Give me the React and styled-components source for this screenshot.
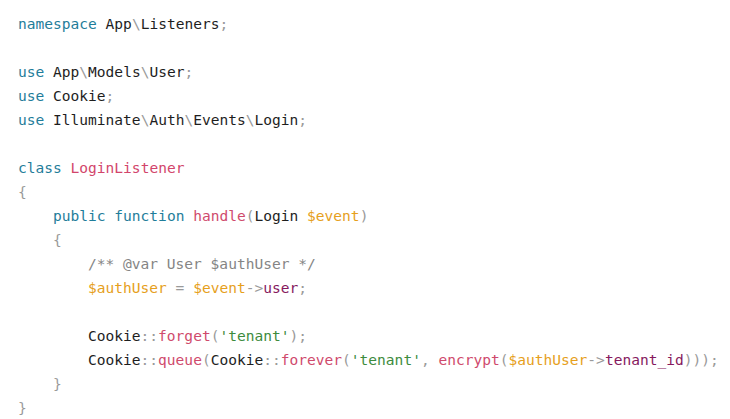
import React from "react";
import styled, { createGlobalStyle } from "styled-components";

const GlobalStyle = createGlobalStyle`
    html, body {
        margin: 0;
        padding: 0;
        background: #ffffff;
    }
`;

const colors = {
    kw: "#1f7d9a",
    cls: "#d2456b",
    fn: "#cf4a6c",
    vr: "#e6a01c",
    prop: "#86195e",
    str: "#3d8b3d",
    punc: "#9a9a9a",
    cmt: "#858585",
    txt: "#1e1e1e",
};

const CodeBlock = styled.pre`
    margin: 0;
    padding: 12px 18px;
    font-family: "DejaVu Sans Mono", "Liberation Mono", monospace;
    font-size: 14.55px;
    line-height: 24px;
    color: ${colors.txt};
    white-space: pre;
`;

const Line = styled.div`
    height: 24px;
    padding-left: ${props => props.indent * 35}px;
`;

const Tok = styled.span`
    color: ${props => colors[props.k] || colors.txt};
`;

const lines = [
    [0, [["kw", "namespace"], ["txt", " App"], ["punc", "\\"], ["txt", "Listeners"], ["punc", ";"]]],
    [0, []],
    [0, [["kw", "use"], ["txt", " App"], ["punc", "\\"], ["txt", "Models"], ["punc", "\\"], ["txt", "User"], ["punc", ";"]]],
    [0, [["kw", "use"], ["txt", " Cookie"], ["punc", ";"]]],
    [0, [["kw", "use"], ["txt", " Illuminate"], ["punc", "\\"], ["txt", "Auth"], ["punc", "\\"], ["txt", "Events"], ["punc", "\\"], ["txt", "Login"], ["punc", ";"]]],
    [0, []],
    [0, [["kw", "class"], ["txt", " "], ["cls", "LoginListener"]]],
    [0, [["punc", "{"]]],
    [1, [["kw", "public"], ["txt", " "], ["kw", "function"], ["txt", " "], ["fn", "handle"], ["punc", "("], ["txt", "Login "], ["vr", "$event"], ["punc", ")"]]],
    [1, [["punc", "{"]]],
    [2, [["cmt", "/** @var User $authUser */"]]],
    [2, [["vr", "$authUser"], ["txt", " "], ["punc", "="], ["txt", " "], ["vr", "$event"], ["punc", "->"], ["prop", "user"], ["punc", ";"]]],
    [2, []],
    [2, [["txt", "Cookie"], ["punc", "::"], ["fn", "forget"], ["punc", "("], ["str", "'tenant'"], ["punc", ");"]]],
    [2, [["txt", "Cookie"], ["punc", "::"], ["fn", "queue"], ["punc", "("], ["txt", "Cookie"], ["punc", "::"], ["fn", "forever"], ["punc", "("], ["str", "'tenant'"], ["punc", ", "], ["fn", "encrypt"], ["punc", "("], ["vr", "$authUser"], ["punc", "->"], ["prop", "tenant_id"], ["punc", ")));"]]],
    [1, [["punc", "}"]]],
    [0, [["punc", "}"]]],
];

const App = () => (
    <>
        <GlobalStyle />
        <CodeBlock>
            {lines.map(([indent, toks], i) => (
                <Line key={i} indent={indent}>
                    {toks.map(([k, text], j) => (
                        <Tok key={j} k={k}>{text}</Tok>
                    ))}
                </Line>
            ))}
        </CodeBlock>
    </>
);

export default App;
